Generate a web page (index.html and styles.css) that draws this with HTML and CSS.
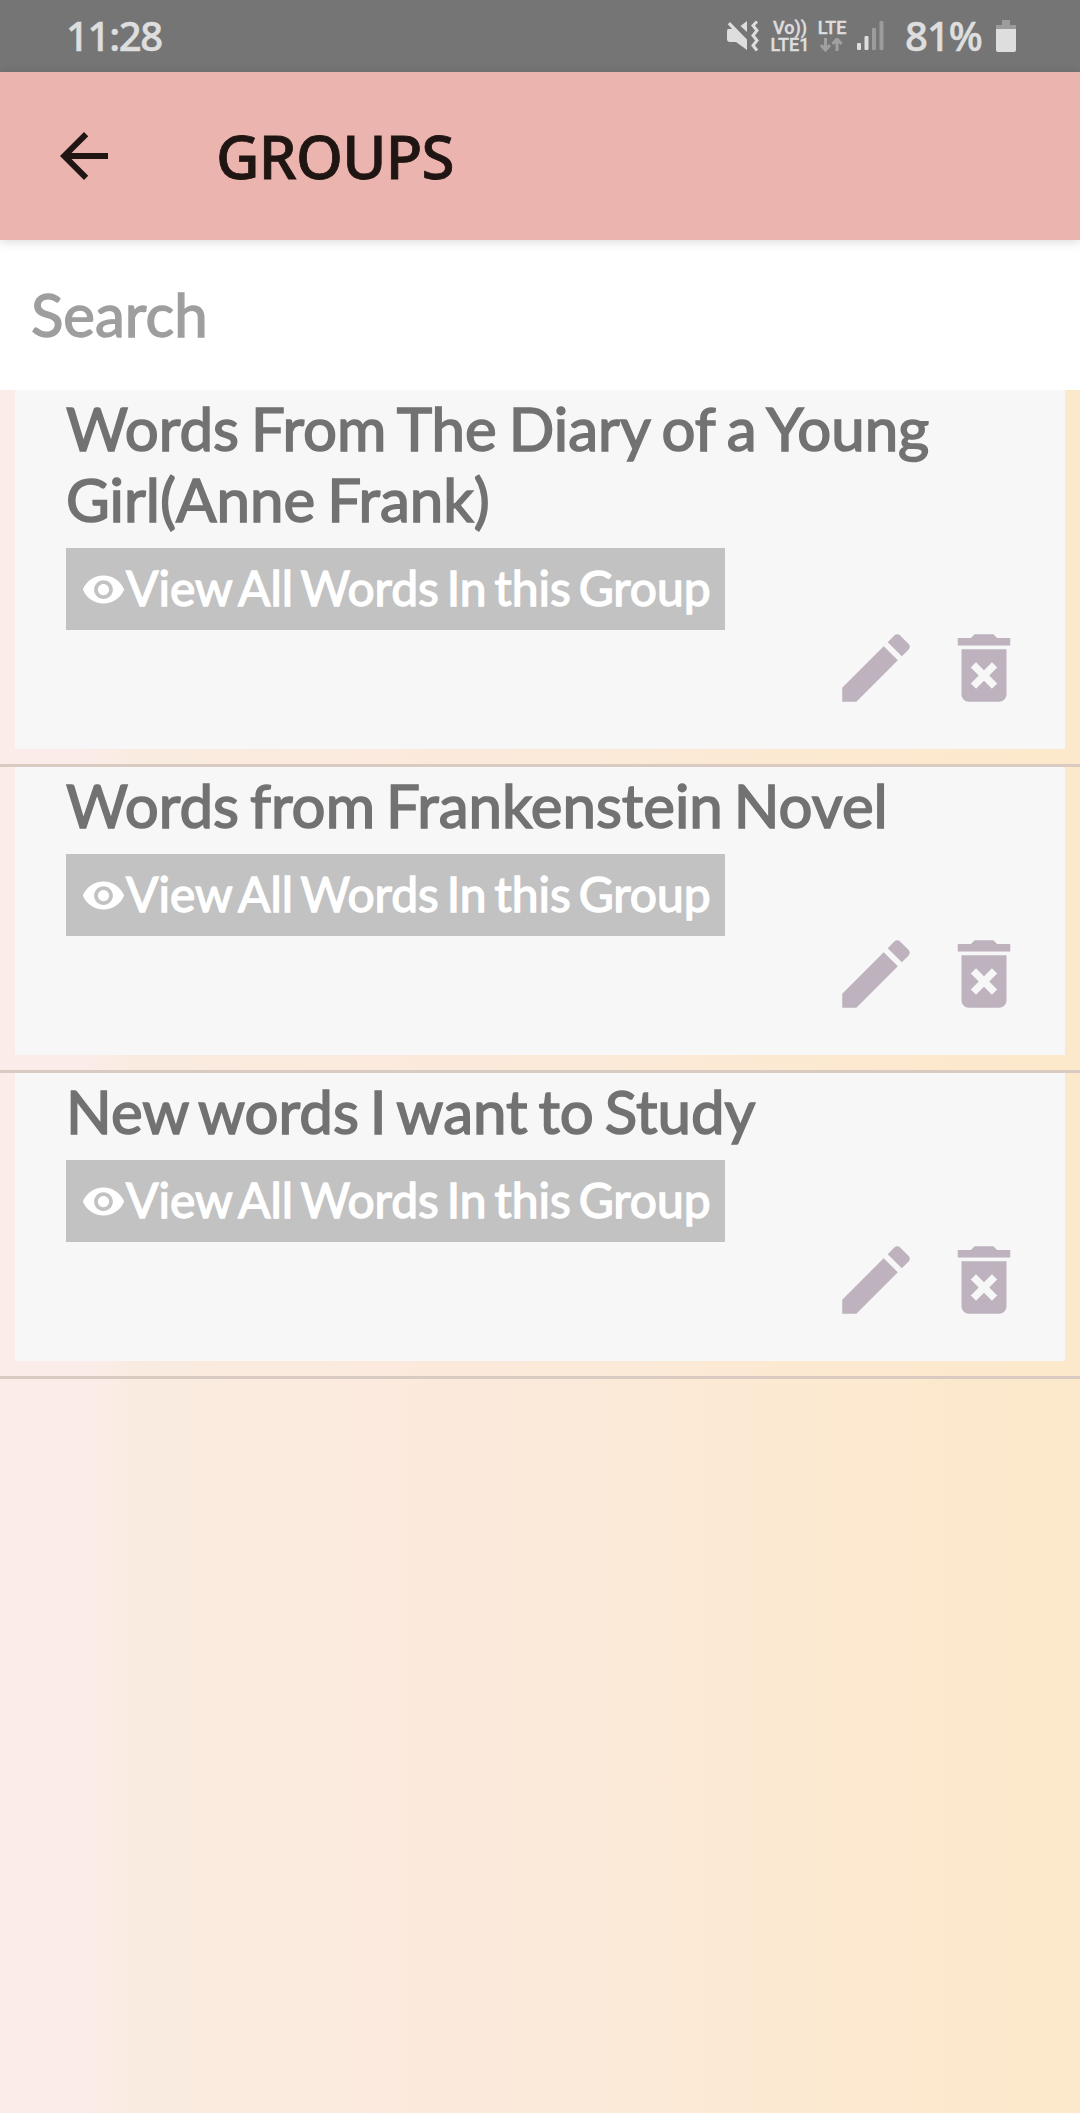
FILE: index.html
```
<!DOCTYPE html>
<html lang="en">
<head>
  <meta charset="UTF-8">
  <meta name="viewport" content="width=device-width, initial-scale=1.0">
  <title>Groups</title>
  <link rel="stylesheet" href="styles.css">
</head>
<body>

  <!-- Icons -->
  <svg class="sprite" aria-hidden="true">
    <symbol id="eye" viewBox="0 0 24 24"><path d="M12 4.5C7 4.5 2.73 7.61 1 12c1.73 4.39 6 7.5 11 7.5s9.27-3.11 11-7.5c-1.73-4.39-6-7.5-11-7.5zM12 17c-2.76 0-5-2.24-5-5s2.24-5 5-5 5 2.24 5 5-2.24 5-5 5zm0-8c-1.66 0-3 1.34-3 3s1.34 3 3 3 3-1.34 3-3-1.34-3-3-3z"/></symbol>
    <symbol id="pencil" viewBox="0 0 24 24"><path d="M3 17.25V21h3.75L17.81 9.94l-3.75-3.75L3 17.25zM20.71 7.04c.39-.39.39-1.02 0-1.41l-2.34-2.34c-.39-.39-1.02-.39-1.41 0l-1.83 1.83 3.75 3.75 1.83-1.83z"/></symbol>
    <symbol id="trash" viewBox="0 0 24 24"><path d="M6 19c0 1.1.9 2 2 2h8c1.1 0 2-.9 2-2V7H6v12zm2.46-7.12l1.41-1.41L12 12.59l2.12-2.12 1.41 1.41L13.41 14l2.12 2.12-1.41 1.41L12 15.41l-2.12 2.12-1.41-1.41L10.59 14l-2.13-2.12zM15.5 4l-1-1h-5l-1 1H5v2h14V4h-3.5z"/></symbol>
  </svg>

  <!-- Status bar -->
  <div class="status-bar">
    <div class="time">11:28</div>
    <div class="status-icons">
      <svg class="mute" viewBox="0 0 32 32">
        <path d="M1 9h4L0.8 4.2 3 2 20 19.5V30L9 22H3Q0 22 0 19V12Q0 9 1 9zM13.5 6L20 1V12z"/>
        <path class="wave" d="M30 1.5l-4 4 4 5-4 5 4 5-4 5 4 5"/>
      </svg>
      <div class="net volte"><span>Vo))</span><span>LTE1</span></div>
      <div class="net lte">
        <span>LTE</span>
        <svg class="arrows" viewBox="0 0 24 14"><path d="M5.500 0v11M1 7l4.500 5L10 7M17 13V2M12.500 6L17 1l4.500 5"/></svg>
      </div>
      <svg class="signal" viewBox="0 0 28 30">
        <rect x="0" y="22" width="4" height="7" rx="1"/>
        <rect x="7.500" y="15" width="4" height="14" rx="1"/>
        <rect class="off" x="15" y="7" width="4" height="22" rx="1"/>
        <rect class="off" x="22.500" y="0" width="4" height="29" rx="1"/>
      </svg>
      <div class="percent">81%</div>
      <svg class="battery" viewBox="0 0 20 32">
        <path class="off" d="M6 0h8v5h6v5H0V5h6z"/>
        <path d="M0 9h20v21q0 2-2 2H2q-2 0-2-2z"/>
      </svg>
    </div>
  </div>

  <!-- Header -->
  <div class="header">
    <svg class="back" viewBox="0 0 24 24"><path d="M20 11H7.830l5.590-5.590L12 4l-8 8 8 8 1.410-1.410L7.830 13H20v-2z"/></svg>
    <h1>GROUPS</h1>
  </div>

  <input class="search" type="text" placeholder="Search">

  <!-- Group list -->
  <div class="list">
    <div class="item">
      <div class="card">
        <h2>Words From The Diary of a Young Girl(Anne Frank)</h2>
        <button class="view"><svg><use href="#eye"/></svg><span>View All Words In this Group</span></button>
        <div class="actions">
          <svg><use href="#pencil"/></svg>
          <svg><use href="#trash"/></svg>
        </div>
      </div>
    </div>
    <div class="item">
      <div class="card">
        <h2>Words from Frankenstein Novel</h2>
        <button class="view"><svg><use href="#eye"/></svg><span>View All Words In this Group</span></button>
        <div class="actions">
          <svg><use href="#pencil"/></svg>
          <svg><use href="#trash"/></svg>
        </div>
      </div>
    </div>
    <div class="item">
      <div class="card">
        <h2>New words I want to Study</h2>
        <button class="view"><svg><use href="#eye"/></svg><span>View All Words In this Group</span></button>
        <div class="actions">
          <svg><use href="#pencil"/></svg>
          <svg><use href="#trash"/></svg>
        </div>
      </div>
    </div>
  </div>

</body>
</html>
```
FILE: styles.css
```
* { margin:0; padding:0; box-sizing:border-box; }
body { font-family:Lato, sans-serif; min-height:100vh; background:linear-gradient(90deg, #fbecea 0%, #fbece9 8%, #faebe0 13%, #fbeadd 35%, #fbead9 55%, #fce9d1 75%, #fce8ca 100%); }
svg { display:block; flex:none; }
.sprite { display:none; }

/* Status bar */
.status-bar { height:72px; padding:0 64px 0 66px; display:flex; align-items:center; justify-content:space-between; background:#757575; color:#dedede; fill:#dedede; font-family:"Noto Sans", sans-serif; }
.time, .percent { font-size:40px; font-weight:500; line-height:72px; -webkit-text-stroke:0.600px #dedede; }
.time { letter-spacing:-1.300px; }
.status-icons { display:flex; align-items:center; }
.mute { width:32px; height:32px; margin-right:12px; }
.wave { fill:none; stroke:#dedede; stroke-width:3; }
.net { display:flex; flex-direction:column; align-items:center; font-family:Roboto, sans-serif; font-size:18px; font-weight:500; line-height:17px; height:34px; -webkit-text-stroke:0.400px #dedede; }
.volte { width:38px; margin-right:8px; }
.lte { width:30px; margin-right:10px; }
.arrows { width:24px; height:14px; margin-top:2px; fill:none; stroke:#a0a0a0; stroke-width:3; }
.signal { width:28px; height:30px; margin-right:20px; }
.off { fill:#9c9c9c; }
.percent { width:79px; margin-right:12px; letter-spacing:-1px; }
.battery { width:20px; height:32px; }

/* Header */
.header { position:relative; height:168px; padding-left:48px; display:flex; align-items:center; gap:96px; background:#ebb4ae; box-shadow:0 2px 10px rgba(0,0,0,0.15); }
.back { width:72px; height:72px; fill:#1f1512; }
.header h1 { font-family:"Noto Sans", sans-serif; font-size:60px; font-weight:500; line-height:72px; color:#1f1512; letter-spacing:-0.800px; -webkit-text-stroke:0.800px #1f1512; }

.search { display:block; width:100%; height:150px; padding:0 31px 2px; border:0; outline:0; background:#fff; font-family:Lato, sans-serif; font-size:60px; }
.search::placeholder { color:#9e9e9e; opacity:1; -webkit-text-stroke:1.400px #9e9e9e; }

/* Group list */
.item { padding:0 15px 15px; border-bottom:3px solid #d9cbc1; }
.card { padding:3px 36px 36px 51px; background:#f7f7f7; }
.card h2 { font-size:60px; font-weight:400; line-height:71px; color:#727272; word-spacing:-3.300px; -webkit-text-stroke:1.600px #727272; }
.item + .item h2 { word-spacing:-4.400px; }
.view { display:flex; align-items:center; width:659px; height:82px; margin-top:13px; padding:0 15px; border:0; background:#c2c2c2; color:#fff; font-family:Lato, sans-serif; font-size:48px; word-spacing:-4.400px; white-space:nowrap; -webkit-text-stroke:1.400px #fff; }
.view span { padding-bottom:3px; }
.view svg { width:45px; height:45px; fill:#fff; stroke:none; }
.actions { display:flex; justify-content:flex-end; gap:18px; margin-top:-7px; }
.actions svg { width:90px; height:90px; fill:#bdb2be; }
```
